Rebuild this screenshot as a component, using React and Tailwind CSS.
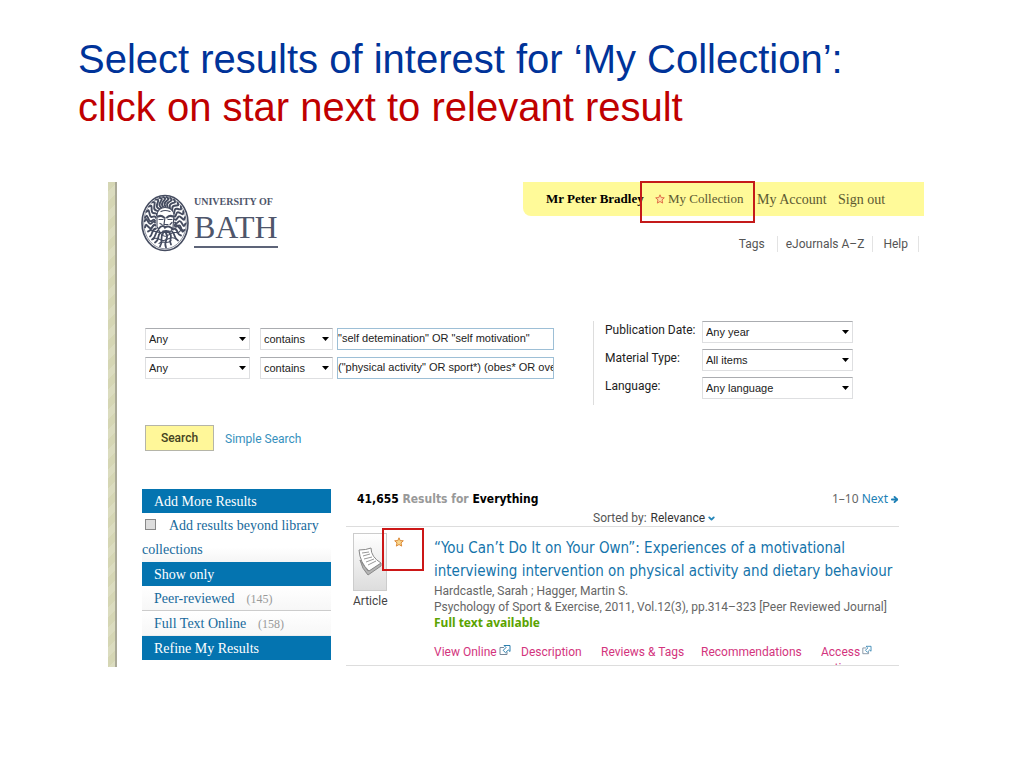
import { ChevronDown, ArrowRight } from 'lucide-react';

const SEARCH_ROWS = [
  { id: 'first', query: '"self detemination" OR "self motivation"' },
  { id: 'second', query: '("physical activity" OR sport*) (obes* OR overweight)' },
];

const FILTERS = [
  { id: 'date', label: 'Publication Date:', value: 'Any year' },
  { id: 'material', label: 'Material Type:', value: 'All items' },
  { id: 'language', label: 'Language:', value: 'Any language' },
];

const FACETS = [
  { label: 'Peer-reviewed', count: 145 },
  { label: 'Full Text Online', count: 158 },
];

// wavy locks of hair around the face, as angles in degrees
const LOCKS = [-172, -158, -144, -131, -119, -108, -98, -88, -78, -67, -55, -42, -29, -15, 0, 14, 166, 180];

function lockPath(deg) {
  const a = (deg * Math.PI) / 180;
  const at = (r, turn) =>
    `${(24 + Math.cos(a + turn) * r * 20).toFixed(1)} ${(28 + Math.sin(a + turn) * r * 25).toFixed(1)}`;
  return `M${at(0.5, 0)}C${at(0.62, 0.22)} ${at(0.7, -0.25)} ${at(0.82, 0)}S${at(0.95, 0.2)} ${at(1.02, 0.05)}`;
}

function Crest() {
  return (
    <svg width="48" height="58" viewBox="0 0 48 57" fill="none" stroke="#454c60" strokeLinecap="round" aria-hidden="true">
      <ellipse cx="24" cy="28.5" rx="23" ry="27.5" strokeWidth="1.6" />
      <ellipse cx="24" cy="28.5" rx="21.3" ry="25.8" strokeWidth="0.6" />
      {LOCKS.map((deg) => (
        <path key={deg} d={lockPath(deg)} strokeWidth="1.9" />
      ))}
      {/* Face */}
      <path d="M16 20c1-5 4-7 8-7s8 2 9 7l-1 13-3 5H19l-3-6z" fill="#fff" strokeWidth="1.1" />
      <path d="M17 22c2-1 4-1 6 1M26 23c2-2 4-2 6-1" strokeWidth="2" />
      <path d="M18 25h4M27 25h4M20 17q4-2 9 0M24 23l-1 7h4M19 29l2 1M31 28l-2 2" strokeWidth="1.2" />
      <path d="M18 34c2-3 5-3 6-1 2-2 6-1 8 2M22 37q3-1 6 0" strokeWidth="2" />
      {/* Beard */}
      <path d="M14 30c-5 2-2 6-7 7M15 34c-5 1-3 6-6 8M17 36c-4 3-1 6-6 9M20 38c-5 3 0 6-6 10M22 39c-4 4 1 7-3 13M25 39c4 4-3 7 0 14M28 38c5 4-1 7 2 12M31 37c4 3 1 6 6 9M33 34c5 1 2 6 7 7M34 30c5 1 3 5 8 6" strokeWidth="1.8" />
      <path d="M9 35c5 4 8 0 12 5s8-2 12-2 5 1 7-3M12 45c4-4 7 2 11 1s8-5 13-1M18 49c3-4 8 2 12-3" strokeWidth="1.1" />
    </svg>
  );
}

function Star({ stroke, fill }) {
  return (
    <svg width="10" height="10" viewBox="0 0 10 10" fill={fill} stroke={stroke} strokeLinejoin="round" aria-hidden="true">
      <path d="M5 .8 6.2 3.6 9.3 3.8 7 5.9 7.7 9.1 5 7.5 2.3 9.1 3 5.9.7 3.8 3.8 3.6Z" />
    </svg>
  );
}

function PopOut() {
  return (
    <svg width="12" height="12" viewBox="0 -1 12 12" fill="none" aria-hidden="true">
      <path d="M5 2.5H1v7h7V7" stroke="#76889a" />
      <path d="M5 .5h6v6L9.3 5 6.5 7.7 4.2 5.4 7 2.5Z" stroke="#2c7fae" />
    </svg>
  );
}

function ArticleIcon() {
  return (
    <svg width="24" height="30" viewBox="0 0 24 30" fill="none" strokeLinejoin="round" aria-hidden="true">
      <path d="M2 13q2 9 8 15l13-9v-3l-13 8Z" fill="#b5b5b5" stroke="#8a8a8a" />
      <path d="M1 3q7 0 12-2 0 9 10 15l-12 8Q2 16 1 3Z" fill="#fff" stroke="#888" />
      <path d="m4 6 7-1M5 9l7-2M6 12l8-2M8 15l8-3M10 18l8-4" stroke="#999" />
    </svg>
  );
}

function Dropdown({ id, label, value, width }) {
  return (
    <div className={`relative shrink-0 ${width}`}>
      <select
        id={id}
        aria-label={label}
        className="block w-full h-[22px] appearance-none border border-[#dedfe1] border-t-[#aaacb0] bg-white pl-[3px] pt-px text-[11px] text-[#222]"
      >
        <option>{value}</option>
      </select>
      <svg className="absolute right-1 top-2 pointer-events-none" width="7" height="6" viewBox="0 0 7 6" aria-hidden="true">
        <path d="M0 1h7L3.500 5Z" fill="#000" />
      </svg>
    </div>
  );
}

function Header() {
  return (
    <header className="flex justify-between items-start">
      <a href="#home" className="flex ml-6 mt-3 text-[#4f566b] font-['Liberation_Serif',serif]" aria-label="University of Bath">
        <Crest />
        <span className="ml-[5px] mt-[2px]">
          <span className="block text-[10px] leading-3 font-bold whitespace-nowrap">UNIVERSITY OF</span>
          <span className="block text-[32px] leading-[38px] border-b-2 border-[#5d6478]">BATH</span>
        </span>
      </a>
      <div className="w-[401px]">
        <nav className="flex h-[34px] items-center bg-[#fffa99] rounded-bl-lg pl-[23px] text-[14px] text-[#5c5931] whitespace-nowrap font-['Liberation_Serif',serif]">
          <span className="w-[94px] text-[13px] font-bold text-black">Mr Peter Bradley</span>
          <a href="#collection" className="relative flex items-center gap-[3px] w-[117px] pl-[15px] h-full text-[13px]">
            <Star stroke="#e07048" fill="#ffe0a0" />
            My Collection
            <span className="absolute -top-px left-0 w-[115px] h-[42px] border-2 border-[#c41a1a]" />
          </a>
          <a href="#account" className="w-[81px]">My Account</a>
          <a href="#signout">Sign out</a>
        </nav>
        <nav className="flex justify-end mt-5 mr-[5px] text-[12px] leading-4 text-[#555]">
          <a href="#tags" className="pr-3 border-r border-[#e3e3e3]">Tags</a>
          <a href="#ejournals" className="px-2 border-r border-[#e3e3e3]">eJournals A–Z</a>
          <a href="#help" className="px-[10px] border-r border-[#e3e3e3]">Help</a>
        </nav>
      </div>
    </header>
  );
}

function SearchForm() {
  return (
    <form className="mt-[69px] pl-7 font-['Liberation_Sans',sans-serif]">
      <div className="flex">
        <div className="flex flex-col gap-[7px] pt-[7px] w-[448px]">
          {SEARCH_ROWS.map((row) => (
            <div key={row.id} className="flex">
              <Dropdown label="Field" value="Any" width="w-[105px] mr-[10px]" />
              <Dropdown label="Match" value="contains" width="w-[73px] mr-1" />
              <input
                type="text"
                aria-label="Query"
                defaultValue={row.query}
                className="w-[217px] h-[22px] border border-[#9dbfd6] pb-[2px] text-[11px] text-[#222]"
              />
            </div>
          ))}
        </div>
        <div className="flex flex-col gap-[6px] h-[84px] border-l border-[#ddd] pl-[11px]">
          {FILTERS.map((f) => (
            <div key={f.id} className="flex">
              <label htmlFor={f.id} className="w-[97px] text-[12px] leading-[18px] text-[#222] whitespace-nowrap font-['Roboto',sans-serif]">
                {f.label}
              </label>
              <Dropdown id={f.id} value={f.value} width="w-[151px]" />
            </div>
          ))}
        </div>
      </div>
      <div className="flex items-center mt-5 gap-[11px] text-[12px] font-['Roboto',sans-serif]">
        <button type="button" className="w-[69px] h-[26px] border border-[#b5b5a8] bg-[#fff799] text-[#44421f] font-medium">
          Search
        </button>
        <a href="#simple" className="pt-[2px] text-[#3690bd]">Simple Search</a>
      </div>
    </form>
  );
}

function SidebarHeading({ children }) {
  return <h2 className="bg-[#0474b0] text-white h-6 leading-[26px] pl-3">{children}</h2>;
}

function Sidebar() {
  return (
    <aside className="w-[189px] shrink-0 text-[14px] leading-6 text-[#176a9c] font-['Liberation_Serif',serif]">
      <SidebarHeading>Add More Results</SidebarHeading>
      <label className="block h-[49px] pt-px bg-linear-to-b from-white from-70% to-[#f5f5f5]">
        <input
          type="checkbox"
          className="appearance-none w-[11px] h-[11px] ml-[3px] mr-[13px] border border-[#888] bg-[#ddd]"
        />
        Add results beyond library collections
      </label>
      <SidebarHeading>Show only</SidebarHeading>
      <ul>
        {FACETS.map((f) => (
          <li key={f.label} className="flex gap-3 h-[25px] pt-px pl-3 border-b border-[#ccc] last:border-[#eee] bg-linear-to-b from-white to-[#f7f7f7]">
            <a href="#facet">{f.label}</a>
            <span className="text-[12px] text-[#999]">({f.count})</span>
          </li>
        ))}
      </ul>
      <SidebarHeading>Refine My Results</SidebarHeading>
    </aside>
  );
}

function Results() {
  return (
    <section className="flex-1 min-w-0 text-[12px] leading-4 text-[#666]">
      <div className="flex justify-between pt-[2px] pl-[11px]">
        <h2 className="font-bold text-[#999] font-['DejaVu_Sans_Condensed','Noto_Sans',sans-serif]">
          <span className="text-black">41,655</span> Results for <span className="text-black">Everything</span>
        </h2>
        <div className="flex items-center font-['Noto_Sans',sans-serif]">
          1–10&nbsp;<a href="#next" className="flex items-center gap-[2px] text-[#1c7fb5]">Next <ArrowRight size={9} strokeWidth={5} /></a>
        </div>
      </div>
      <div className="flex items-center pl-[247px] mt-[3px] h-[17px] border-b border-[#ddd] text-[#555]">
        Sorted by:&nbsp;
        <button type="button" className="flex items-center gap-[2px] ml-px text-[#333]">
          Relevance <ChevronDown size={9} strokeWidth={5} color="#2486b9" />
        </button>
      </div>

      <article className="flex h-[139px] overflow-hidden border-b border-[#ddd]">
        <div className="relative w-[88px] shrink-0 pl-[7px] pt-[6px]">
          <div className="flex w-[34px] h-[58px] items-center justify-center border border-[#ccc] bg-linear-to-b from-white to-[#ddd]">
            <ArticleIcon />
          </div>
          <div className="mt-[2px] text-[#444]">Article</div>
          <button type="button" aria-label="Add to My Collection" className="absolute left-9 top-px w-[42px] h-[43px] border-2 border-[#cc1717] pl-[10px] pt-[7px] flex items-start">
            <Star stroke="#dc8a38" fill="#f9d68c" />
          </button>
        </div>
        <div className="flex-1 min-w-0 pt-[10px]">
          <h3 className="text-[15px] leading-[23px] text-[#1474ab] whitespace-nowrap font-['DejaVu_Sans_Condensed','Roboto',sans-serif]">
            <a href="#article">
              “You Can’t Do It on Your Own”: Experiences of a motivational
              <br />
              interviewing intervention on physical activity and dietary behaviour
            </a>
          </h3>
          <p>Hardcastle, Sarah ; Hagger, Martin S.</p>
          <p className="whitespace-nowrap">Psychology of Sport &amp; Exercise, 2011, Vol.12(3), pp.314–323 [Peer Reviewed Journal]</p>
          <p className="font-bold text-[#5ba300] font-['Noto_Sans',sans-serif]">Full text available</p>
          <nav className="flex mt-[13px] text-[#d3347d] whitespace-nowrap">
            <a href="#view" className="flex gap-[2px] w-[87px]">View Online <PopOut /></a>
            <a href="#description" className="w-[80px]">Description</a>
            <a href="#reviews" className="w-[100px]">Reviews &amp; Tags</a>
            <a href="#recommendations" className="w-[120px]">Recommendations</a>
            <a href="#access" className="w-[51px]">
              <span className="flex gap-[2px]">Access <PopOut /></span>
              options
            </a>
          </nav>
        </div>
      </article>
    </section>
  );
}

export default function App() {
  return (
    <main className="min-h-screen bg-white pt-[35px] font-['Roboto',sans-serif]">
      <h1 className="pl-[78px] text-[40px] leading-[48px] text-[#003399] font-['Liberation_Sans',sans-serif]">
        Select results of interest for ‘My Collection’:
        <span className="block text-[#c00000]">click on star next to relevant result</span>
      </h1>

      <div className="flex mt-[51px] ml-[108px] mr-[100px]">
        <div className="w-[9px] shrink-0 border-r-2 border-[#aaa997] bg-[repeating-linear-gradient(135deg,#d5d6b4_0_7px,#dbdcbf_7px_14px)]" />
        <div className="flex-1 min-w-0 pb-px">
          <Header />
          <SearchForm />
          <div className="flex mt-[38px] px-[25px] gap-[15px]">
            <Sidebar />
            <Results />
          </div>
        </div>
      </div>
    </main>
  );
}
